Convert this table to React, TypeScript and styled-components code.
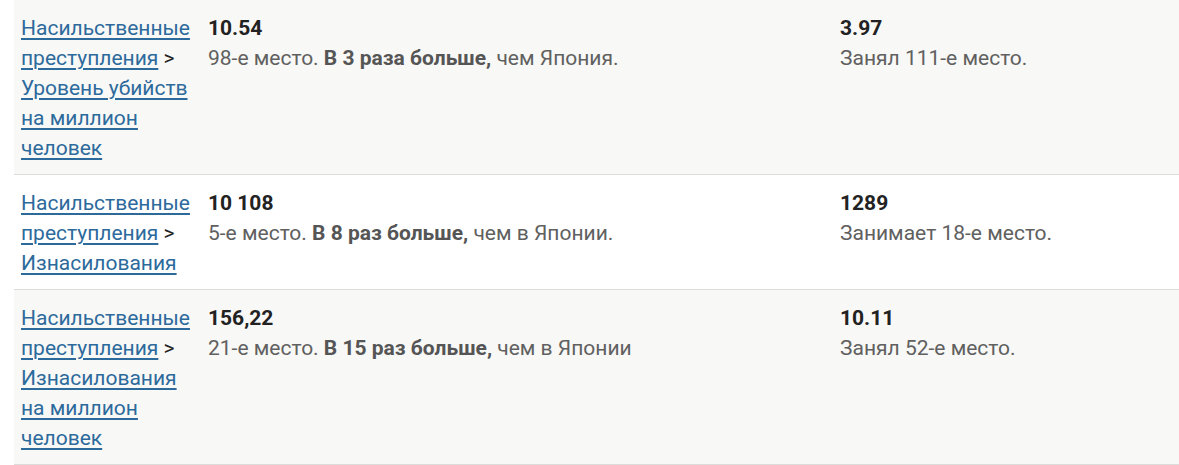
import styled, { createGlobalStyle } from "styled-components";

const GlobalStyle = createGlobalStyle`
  html, body {
    margin: 0;
    padding: 0;
    background: #fff;
  }
  body {
    font-family: Roboto, "Liberation Sans", sans-serif;
  }
`;

const Table = styled.div`
  margin-left: 14px;
  width: calc(100% - 14px);
`;

const Row = styled.div<{ $shade: boolean }>`
  display: grid;
  grid-template-columns: 187px 632px 1fr;
  padding: 13px 0 11px;
  background: ${(props) => (props.$shade ? "#f8f8f6" : "#ffffff")};
  border-bottom: 1px solid #dcdcda;
`;

const Cell = styled.div`
  padding: 0 7px;
  font-size: 21px;
  line-height: 30px;
  color: #606060;
`;

const Crumb = styled.a`
  color: #2d6a9c;
  text-decoration: underline;
  text-underline-offset: 3px;
  text-decoration-thickness: 2px;
`;

const Sep = styled.span`
  color: #222;
`;

const Value = styled.div`
  font-weight: 700;
  color: #222;
`;

const Strong = styled.b`
  font-weight: 700;
  color: #555;
`;

type Item = {
  topic: string;
  value: string;
  rank: string;
  times?: string;
  tail?: string;
  value2: string;
  rank2: string;
};

const rows: Item[] = [
  {
    topic: "Уровень убийств на миллион человек",
    value: "10.54",
    rank: "98-е место. ",
    times: "В 3 раза больше,",
    tail: " чем Япония.",
    value2: "3.97",
    rank2: "Занял 111-е место.",
  },
  {
    topic: "Изнасилования",
    value: "10 108",
    rank: "5-е место. ",
    times: "В 8 раз больше,",
    tail: " чем в Японии.",
    value2: "1289",
    rank2: "Занимает 18-е место.",
  },
  {
    topic: "Изнасилования на миллион человек",
    value: "156,22",
    rank: "21-е место. ",
    times: "В 15 раз больше,",
    tail: " чем в Японии",
    value2: "10.11",
    rank2: "Занял 52-е место.",
  },
];

export default function App() {
  return (
    <>
      <GlobalStyle />
      <Table>
        {rows.map((item, idx) => (
          <Row $shade={idx % 2 === 0} key={idx}>
            <Cell>
              <Crumb href="#">Насильственные преступления</Crumb> <Sep>&gt;</Sep>{" "}
              <Crumb href="#">{item.topic}</Crumb>
            </Cell>
            <Cell>
              <Value>{item.value}</Value>
              {item.rank}
              <Strong>{item.times}</Strong>
              {item.tail}
            </Cell>
            <Cell>
              <Value>{item.value2}</Value>
              {item.rank2}
            </Cell>
          </Row>
        ))}
      </Table>
    </>
  );
}
